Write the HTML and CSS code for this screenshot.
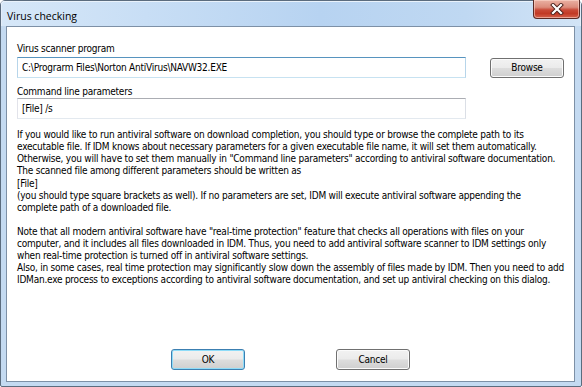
FILE: index.html
```html
<!DOCTYPE html>
<html lang="en">
<head>
<meta charset="utf-8">
<title>Virus checking</title>
<link rel="stylesheet" href="styles.css">
</head>
<body>
<div class="window">
  <div class="titlebar">
    <span class="title">Virus checking</span>
    <button class="close" aria-label="Close">
      <svg width="14" height="12" viewBox="0 0 14 12">
        <path d="M3 2 L11 10 M11 2 L3 10" stroke="#4a1f1a" stroke-width="4" stroke-linecap="square" fill="none"/>
        <path d="M3 2 L11 10 M11 2 L3 10" stroke="#ffffff" stroke-width="2.2" stroke-linecap="square" fill="none"/>
      </svg>
    </button>
  </div>
  <div class="client">
    <div class="fields">
      <label class="label">Virus scanner program</label>
      <div class="input-row">
        <input class="input hover" type="text" value="C:\Prograrm Files\Norton AntiVirus\NAVW32.EXE">
        <button class="btn browse">Browse</button>
      </div>
      <label class="label label2">Command line parameters</label>
      <div class="input-row">
        <input class="input" type="text" value="[File] /s">
      </div>
    </div>
    <p class="text">If you would like to run antiviral software on download completion, you should type or browse the complete path to its<br>executable file. If IDM knows about necessary parameters for a given executable file name, it will set them automatically.<br>Otherwise, you will have to set them manually in "Command line parameters" according to antiviral software documentation.<br>The scanned file among different parameters should be written as<br>[File]<br>(you should type square brackets as well). If no parameters are set, IDM will execute antiviral software appending the<br>complete path of a downloaded file.</p>
    <p class="text text2">Note that all modern antiviral software have "real-time protection" feature that checks all operations with files on your<br>computer, and it includes all files downloaded in IDM. Thus, you need to add antiviral software scanner to IDM settings only<br>when real-time protection is turned off in antiviral software settings.<br>Also, in some cases, real time protection may significantly slow down the assembly of files made by IDM. Then you need to add<br>IDMan.exe process to exceptions according to antiviral software documentation, and set up antiviral checking on this dialog.</p>
    <div class="footer">
      <button class="btn default">OK</button>
      <button class="btn">Cancel</button>
    </div>
  </div>
</div>
</body>
</html>
```
FILE: styles.css
```css
* { box-sizing: border-box; }
html, body { margin: 0; padding: 0; background: #ffffff; }
body { width: 582px; height: 387px; overflow: hidden; }

.window {
  width: 582px;
  height: 387px;
  border: 1px solid #5b6c7e;
  border-radius: 5px 5px 2px 2px;
  background: #c4daf1;
  display: flex;
  flex-direction: column;
  font-family: "DejaVu Sans Condensed", "DejaVu Sans", sans-serif;
  font-size: 10px;
  letter-spacing: -0.23px;
  color: #000;
}

.titlebar {
  height: 25px;
  flex: none;
  display: flex;
  align-items: flex-start;
  background: linear-gradient(90deg, #d6e7f8 0%, #c8def5 25%, #b7d3f1 55%, #bfd8f2 80%, #d2e4f6 100%);
  border-radius: 4px 4px 0 0;
  box-shadow: inset 0 1px 0 #e9f2fb, inset 1px 0 0 #e4eefa, inset -1px 0 0 #e4eefa;
}

.title {
  font-family: "Open Sans", sans-serif;
  font-size: 10.5px;
  letter-spacing: 0;
  line-height: 14px;
  padding: 8px 0 0 6px;
  color: #000;
}

.close {
  margin-left: auto;
  margin-right: 1px;
  margin-top: -1px;
  width: 47px;
  height: 19px;
  padding: 0;
  border: 1px solid #5a2a25;
  border-top: none;
  border-radius: 0 0 4px 4px;
  background: linear-gradient(180deg, #eab1a3 0%, #dc8c7c 40%, #c94a38 55%, #c23a26 75%, #d4624d 100%);
  box-shadow: inset 0 0 0 1px rgba(255, 220, 210, 0.55);
  display: flex;
  align-items: center;
  justify-content: center;
}

.client {
  flex: 1;
  margin: 0 6px 4px 5px;
  border: 1px solid #7d90a6;
  background: #ffffff;
  padding: 15px 10px 11px 10px;
  display: flex;
  flex-direction: column;
}

.fields {
  display: flex;
  flex-direction: column;
}

.label {
  line-height: 13px;
  height: 13px;
  margin-bottom: 2px;
}
.label2 { margin-top: 7px; margin-bottom: 0; }

.input-row {
  display: flex;
  align-items: center;
  gap: 24px;
}

.input {
  width: 449px;
  height: 21px;
  margin: 0;
  padding: 0 0 1px 4px;
  border: 1px solid;
  border-color: #abadb3 #dbdfe6 #e3e9ef #e2e3ea;
  font: inherit;
  letter-spacing: inherit;
  color: #000;
  background: #fff;
  outline: none;
}
.input.hover {
  border-color: #5794bf #b7d5ea #c7e2f1 #b7d5ea;
}

.btn {
  width: 74px;
  height: 21px;
  padding: 0 0 1px 0;
  font: inherit;
  letter-spacing: inherit;
  color: #000;
  border: 1px solid #707070;
  border-radius: 3px;
  background: linear-gradient(180deg, #f2f2f2 0%, #ebebeb 48%, #dddddd 52%, #cfcfcf 100%);
  box-shadow: inset 0 0 0 1px #fbfbfb;
}
.browse { height: 20px; }
.btn.default {
  border-color: #3c7fb1;
  box-shadow: inset 0 0 0 1px #8fdcf8;
}

.text {
  margin: 10px 0 0 0;
  line-height: 12.15px;
  white-space: nowrap;
}
.text2 { margin-top: 12px; line-height: 11.9px; }

.footer {
  margin-top: auto;
  display: flex;
  justify-content: center;
  gap: 91px;
}
```
